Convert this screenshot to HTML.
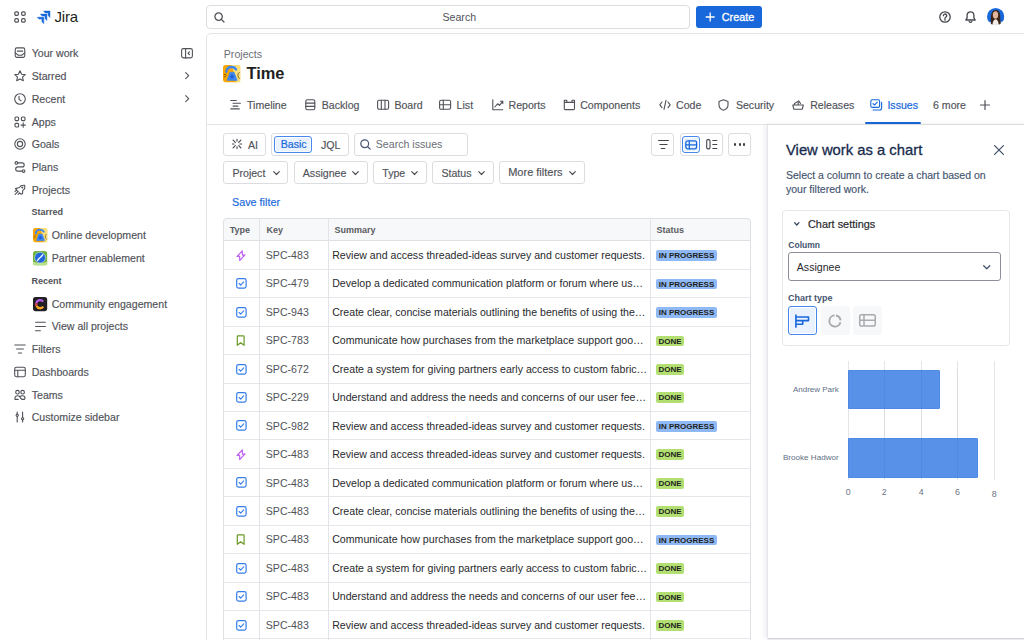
<!DOCTYPE html>
<html><head><meta charset="utf-8">
<style>
*{box-sizing:border-box;margin:0;padding:0}
html,body{width:1024px;height:640px;overflow:hidden;background:#fff}
body{position:relative;font-family:"Liberation Sans",sans-serif;font-size:10.6px;color:#292a2e}
.a{position:absolute}
.t{position:absolute;white-space:nowrap;height:20px;line-height:20px}
svg{position:absolute;overflow:visible}
.ic{fill:none;stroke:#505258;stroke-width:1.1;stroke-linecap:round;stroke-linejoin:round}
.side{color:#505258;-webkit-text-stroke:0.15px #505258}
.btn{position:absolute;border:1px solid #dcdde0;border-radius:3px;background:#fff}
.row{position:absolute;left:223.4px;width:527.4px;height:28.44px;border-bottom:1px solid #e3e4e7}
</style></head><body>

<!-- TOP BAR -->
<div class="a" style="left:206px;top:33px;width:830px;height:620px;border:1px solid #e3e4e7;border-top-left-radius:5px"></div>
<svg style="left:14px;top:11px" width="12" height="12" viewBox="0 0 12 12"><g class="ic" style="stroke:#505258;stroke-width:1.2"><rect x="0.8" y="0.8" width="3.6" height="3.6" rx="1.3"/><rect x="7.6" y="0.8" width="3.6" height="3.6" rx="1.3"/><rect x="0.8" y="7.6" width="3.6" height="3.6" rx="1.3"/><rect x="7.6" y="7.6" width="3.6" height="3.6" rx="1.3"/></g></svg>
<svg style="left:36px;top:9px" width="16" height="16" viewBox="0 0 16 16"><g fill="#1868db"><path id="jl" d="M-6.5,0.2 L0,0.2 L0,6.7 Q-0.6,6.2 -1.9,4.7 L-1.9,2.1 L-4.7,2.1 Q-6.2,0.8 -6.5,0.2Z" stroke="#1868db" stroke-width="0.45" stroke-linejoin="round" transform="translate(14,1.8)"/><use href="#jl" transform="translate(-3.1,3.1)"/><use href="#jl" transform="translate(-6.2,6.2)"/></g></svg>
<div class="t" style="left:54.5px;top:7px;font-size:15px;color:#1e1f21;letter-spacing:-0.2px">Jira</div>

<div class="a" style="left:206px;top:5px;width:484px;height:24px;border:1px solid #dcdde0;border-radius:4px"></div>
<svg style="left:214px;top:12px" width="11" height="11" viewBox="0 0 11 11"><g class="ic" style="stroke-width:1.3"><circle cx="4.6" cy="4.6" r="3.7"/><path d="M7.4 7.4l2.6 2.6"/></g></svg>
<div class="t" style="left:442.5px;top:7px;color:#505258">Search</div>

<div class="a" style="left:695.6px;top:5.9px;width:66.2px;height:22.1px;background:#1868db;border-radius:3px"></div>
<svg style="left:704.6px;top:12px" width="10.4" height="10" viewBox="0 0 10 10"><path d="M5 0.5v9M0.5 5h9" stroke="#fff" stroke-width="1.3" fill="none"/></svg>
<div class="t" style="left:721.8px;top:7px;color:#fff;font-size:10.8px;-webkit-text-stroke:0.3px #fff">Create</div>

<svg style="left:938.6px;top:11px" width="12" height="12" viewBox="0 0 12 12"><g class="ic" style="stroke-width:1.3;stroke:#44464c"><circle cx="6" cy="6" r="5.2"/><path d="M4.4 4.7a1.65 1.65 0 1 1 2.3 1.5c-.5.3-.7.6-.7 1.1v.2"/></g><circle cx="6" cy="8.9" r="0.8" fill="#44464c"/></svg>
<svg style="left:965px;top:11px" width="11" height="12" viewBox="0 0 11 12"><g class="ic" style="stroke-width:1.3;stroke:#44464c"><path d="M5.5 0.8c-2 0-3.4 1.5-3.4 3.5v2.6L0.8 9h9.4L8.9 6.9V4.3c0-2-1.4-3.5-3.4-3.5z"/><path d="M4.2 10.6c.4.5.8.7 1.3.7s.9-.2 1.3-.7"/></g></svg>
<svg style="left:987px;top:8.4px" width="17.3" height="17.3" viewBox="0 0 17.3 17.3"><defs><clipPath id="avc"><circle cx="8.65" cy="8.65" r="8.65"/></clipPath></defs><g clip-path="url(#avc)"><rect width="17.3" height="17.3" fill="#1868db"/><path d="M0 13.6Q3 12.8 5 15.5L12 15.5Q14 12.8 17.3 13.6V17.3H0Z" fill="#fff"/><path d="M4.2 16.5C3.4 12 3.6 9 4.6 5.2C5.4 2.8 7 1.9 8.8 1.9C11 1.9 12.6 3.3 13 6C13.4 9.5 13.2 13 14 16.5Z" fill="#3a2418"/><ellipse cx="8.5" cy="7" rx="2.7" ry="3.7" fill="#e2b49c"/><path d="M5.4 17.3C5.6 13.5 6.8 11.5 8.6 11.3C10.5 11.5 11.6 13.5 11.7 17.3Z" fill="#f1ece4"/></g></svg>
<!-- SIDEBAR -->
<!-- sidebar items -->
<svg style="left:14px;top:47.40px" width="12" height="12" viewBox="0 0 12 12"><g class="ic"><rect x="1.25" y="0.85" width="9.5" height="9.5" rx="1.6"/><path d="M3.3 4.1h5.4M1.25 5.9L4.4 8.3h3.2l3.15-2.4"/></g></svg>
<div class="t side" style="left:31.7px;top:43.40px">Your work</div>
<svg style="left:14px;top:70.16px" width="12" height="12" viewBox="0 0 12 12"><g class="ic"><path d="M6 0.8l1.6 3.4 3.6.4-2.7 2.5.8 3.6L6 8.9l-3.3 1.8.8-3.6L.8 4.6l3.6-.4z"/></g></svg>
<div class="t side" style="left:31.7px;top:66.16px">Starred</div>
<svg style="left:14px;top:92.92px" width="12" height="12" viewBox="0 0 12 12"><g class="ic"><circle cx="6" cy="6" r="5.3"/><path d="M5 3.2v3.2l2 1.4"/></g></svg>
<div class="t side" style="left:31.7px;top:88.92px">Recent</div>
<svg style="left:14px;top:115.68px" width="12" height="12" viewBox="0 0 12 12"><g class="ic"><rect x="1" y="1" width="3.6" height="3.6" rx="1"/><rect x="7.4" y="1" width="3.6" height="3.6" rx="1"/><rect x="1" y="7.4" width="3.6" height="3.6" rx="1"/><path d="M9.2 6.9v4.4M7 9.1h4.4"/></g></svg>
<div class="t side" style="left:31.7px;top:111.68px">Apps</div>
<svg style="left:14px;top:138.44px" width="12" height="12" viewBox="0 0 12 12"><g class="ic"><circle cx="6" cy="6" r="5.2"/><circle cx="6" cy="6" r="2.6"/></g></svg>
<div class="t side" style="left:31.7px;top:134.44px">Goals</div>
<svg style="left:14px;top:161.20px" width="12" height="12" viewBox="0 0 12 12"><g class="ic"><circle cx="2.4" cy="1.9" r="1.3"/><circle cx="9.6" cy="10.1" r="1.3"/><path d="M3.7 1.9h4.5a2 2 0 0 1 0 4H3.8a2.1 2.1 0 0 0 0 4.2h4.5"/></g></svg>
<div class="t side" style="left:31.7px;top:157.20px">Plans</div>
<svg style="left:14px;top:183.96px" width="12" height="12" viewBox="0 0 12 12"><g class="ic"><path d="M3.3 6.9L1.5 4.6l3.9-1.1L7 1.7q1.7-.6 3.7-.4.3 1.7-.2 3.6L8.7 6.6l-.1 3-1.3.7-2.1-1.5M1.2 10.3l3-3M4.2 10.4l1.2-1.2M1 7.6l.9-.9"/><circle cx="8.3" cy="3.5" r=".5"/></g></svg>
<div class="t side" style="left:31.7px;top:179.96px">Projects</div>
<svg style="left:180.5px;top:47.8px" width="12" height="10.5" viewBox="0 0 12 10.5"><g class="ic"><rect x="0.6" y="0.6" width="10.8" height="9.3" rx="1.8"/><path d="M4.6 0.6v9.3M8.4 3.9L7.1 5.25l1.3 1.35"/></g></svg>
<svg style="left:184.5px;top:72.46px" width="4.5" height="7.4" viewBox="0 0 4.5 7.4"><path class="ic" d="M0.7 0.7l3 3-3 3"/></svg>
<svg style="left:184.5px;top:95.22px" width="4.5" height="7.4" viewBox="0 0 4.5 7.4"><path class="ic" d="M0.7 0.7l3 3-3 3"/></svg>
<div class="t" style="left:31.5px;top:202.4px;font-size:9px;font-weight:bold;color:#505258">Starred</div>
<div class="t" style="left:31.5px;top:271.2px;font-size:9px;font-weight:bold;color:#505258">Recent</div>
<svg style="left:32.5px;top:228.1px" width="14.2" height="14.2" viewBox="0 0 17.2 17.2"><rect width="17.2" height="17.2" rx="2.6" fill="#fca700"/><path d="M8.5 0H17.2V17.2H13.2Q12 9 8.5 0Z" fill="#fde07a"/><path d="M3.4 6.8C3.6 3.6 6 2 8.6 2C10.7 2 12.3 3 13 4.5" stroke="#3d86f2" stroke-width="2.3" fill="none" stroke-linecap="round"/><path d="M6.9 7.3H11.1L14.3 15.4H4.1Z" fill="#3d86f2" stroke="#3d86f2" stroke-width="0.6" stroke-linejoin="round"/><circle cx="9" cy="11.6" r="1.9" fill="#1f63d8"/><path d="M1 9.3q1.3.9 2.3-.2M0.9 12q1.6.1 2.5-1.4" stroke="#4a3800" stroke-width="0.7" fill="none"/><path d="M16.6 7.2q-2 1.3-1.7 3.4q.3 2 1.8 3.4" stroke="#4a3800" stroke-width="0.7" fill="none"/></svg>
<div class="t side" style="left:51.7px;top:225.3px">Online development</div>
<svg style="left:32.5px;top:251px" width="14.2" height="14.2" viewBox="0 0 14.2 14.2"><rect width="14.2" height="14.2" rx="2.6" fill="#6fb43f"/><path d="M0 10.5Q7 13.5 14.2 10.5V14.2H0Z" fill="#b9e08a"/><circle cx="7.1" cy="6.6" r="5.4" fill="#1f66dc" stroke="#e8f2ff" stroke-width="0.5"/><path d="M9.8 3.6L4.4 9.6" stroke="#fff" stroke-width="1.2" stroke-linecap="round"/><path d="M9.8 3.6L8.6 6.5M4.4 9.6L5.6 6.7" stroke="#dfeaff" stroke-width="0.5"/></svg>
<div class="t side" style="left:51.7px;top:248.2px">Partner enablement</div>
<svg style="left:32.5px;top:296.5px" width="14.2" height="14.2" viewBox="0 0 14.2 14.2"><rect width="14.2" height="14.2" rx="2.6" fill="#1f1f24"/><g fill="none" stroke-width="2.3"><path d="M10.2 4.6A3.9 3.9 0 0 0 3.3 6.2" stroke="#b45ce8"/><path d="M3.3 6.2A3.9 3.9 0 0 0 3.6 9" stroke="#e8484a"/><path d="M3.6 9A3.9 3.9 0 0 0 10.3 9.6" stroke="#f6a623"/></g></svg>
<div class="t side" style="left:51.7px;top:293.6px">Community engagement</div>
<svg style="left:34.5px;top:320.5px" width="11" height="11" viewBox="0 0 11 11"><g class="ic"><path d="M0.6 1.2h9.8M0.6 5.5h9.8M0.6 9.8h4.8"/></g></svg>
<div class="t side" style="left:51.7px;top:316.4px">View all projects</div>
<svg style="left:14px;top:343.20px" width="12" height="12" viewBox="0 0 12 12"><g class="ic"><path d="M0.8 2h10.4M2.6 6h6.8M4.4 10h3.2"/></g></svg>
<div class="t side" style="left:31.7px;top:339.20px">Filters</div>
<svg style="left:14px;top:365.96px" width="12" height="12" viewBox="0 0 12 12"><g class="ic"><rect x="0.7" y="1.3" width="10.6" height="9.4" rx="1.6"/><path d="M0.7 4.2h10.6M3.8 4.2v6.5"/></g></svg>
<div class="t side" style="left:31.7px;top:361.96px">Dashboards</div>
<svg style="left:14px;top:388.72px" width="12" height="12" viewBox="0 0 12 12"><g class="ic"><circle cx="3.5" cy="3.2" r="1.8"/><circle cx="8.6" cy="3.2" r="1.8"/><path d="M1 10.4V9.1a2.4 2.4 0 0 1 2.4-2.4h.5c.9 0 1.6.5 2 1.2l.9 1.5c.4.7 1.1 1 1.9 1h.9a1.4 1.4 0 0 0 1.4-1.4 2.4 2.4 0 0 0-2.4-2.3h-.5c-.8 0-1.5.4-1.9 1M1 10.4h3.2"/></g></svg>
<div class="t side" style="left:31.7px;top:384.72px">Teams</div>
<svg style="left:14px;top:411.48px" width="12" height="12" viewBox="0 0 12 12"><g class="ic"><path d="M3.2 1v1.6M3.2 6v5M8.6 1v5M8.6 9.4v1.6M3.2 2.6l1.2 1.7-1.2 1.7-1.2-1.7z M8.6 6l1.2 1.7-1.2 1.7-1.2-1.7z"/></g></svg>
<div class="t side" style="left:31.7px;top:407.48px">Customize sidebar</div>

<!-- MAIN -->
<div class="t" style="left:223.8px;top:43.5px;color:#6b6e76">Projects</div>
<svg style="left:223px;top:64.6px" width="17.2" height="17.2" viewBox="0 0 17.2 17.2"><rect width="17.2" height="17.2" rx="2.6" fill="#fca700"/><path d="M8.5 0H17.2V17.2H13.2Q12 9 8.5 0Z" fill="#fde07a"/><path d="M3.4 6.8C3.6 3.6 6 2 8.6 2C10.7 2 12.3 3 13 4.5" stroke="#3d86f2" stroke-width="2.3" fill="none" stroke-linecap="round"/><path d="M6.9 7.3H11.1L14.3 15.4H4.1Z" fill="#3d86f2" stroke="#3d86f2" stroke-width="0.6" stroke-linejoin="round"/><circle cx="9" cy="11.6" r="1.9" fill="#1f63d8"/><path d="M1 9.3q1.3.9 2.3-.2M0.9 12q1.6.1 2.5-1.4" stroke="#4a3800" stroke-width="0.7" fill="none"/><path d="M16.6 7.2q-2 1.3-1.7 3.4q.3 2 1.8 3.4" stroke="#4a3800" stroke-width="0.7" fill="none"/></svg>
<div class="t" style="left:246.5px;top:63.2px;font-size:16.4px;font-weight:bold;color:#1e1f21">Time</div>
<svg style="left:229.5px;top:98.7px" width="12" height="12" viewBox="0 0 12 12"><g class="ic"><path d="M0.8 1.5h5.5M3 4.3h7.4M3 7.1h5M0.8 9.9h8.5"/></g></svg>
<div class="t side" style="left:247px;top:94.7px">Timeline</div>
<svg style="left:305px;top:98.7px" width="12" height="12" viewBox="0 0 12 12"><g class="ic"><rect x="0.8" y="0.8" width="9" height="10" rx="1.5"/><path d="M0.8 4.1h9M0.8 7.4h9"/></g></svg>
<div class="t side" style="left:321.8px;top:94.7px">Backlog</div>
<svg style="left:376.8px;top:98.7px" width="12" height="12" viewBox="0 0 12 12"><g class="ic"><rect x="0.6" y="1.3" width="11" height="9" rx="1.5"/><path d="M4.3 1.3v9M8 1.3v9"/></g></svg>
<div class="t side" style="left:394.4px;top:94.7px">Board</div>
<svg style="left:439px;top:98.7px" width="12" height="12" viewBox="0 0 12 12"><g class="ic"><rect x="0.6" y="1.3" width="11" height="9" rx="1.5"/><path d="M0.6 5.8h11M4.3 1.3v9"/></g></svg>
<div class="t side" style="left:456.6px;top:94.7px">List</div>
<svg style="left:491.5px;top:98.7px" width="12" height="12" viewBox="0 0 12 12"><g class="ic"><path d="M0.8 0.8v10h10M2.8 8l2.8-3.2 2 1.6 3.2-4.2M8.4 2.2h2.4v2.4"/></g></svg>
<div class="t side" style="left:508.5px;top:94.7px">Reports</div>
<svg style="left:562.7px;top:98.7px" width="12" height="12" viewBox="0 0 12 12"><g class="ic"><path d="M1.3 3.4v6.3a.9.9 0 0 0 .9.9h8.4a.9.9 0 0 0 .9-.9V3.4H1.3zM1.3 3.4V1.2h2.5v2.2M9 3.4V1.2h2.5v2.2"/></g></svg>
<div class="t side" style="left:580.2px;top:94.7px">Components</div>
<svg style="left:658.5px;top:98.7px" width="12" height="12" viewBox="0 0 12 12"><g class="ic"><path d="M3 3L0.8 5.8 3 8.6M9 3l2.2 2.8L9 8.6M7 1.3L5 10.3"/></g></svg>
<div class="t side" style="left:676px;top:94.7px">Code</div>
<svg style="left:718.3px;top:98.7px" width="12" height="12" viewBox="0 0 12 12"><g class="ic"><path d="M5.5 0.8L1 2.4v3.5c0 2.6 2 4.4 4.5 5.3 2.5-.9 4.5-2.7 4.5-5.3V2.4z"/></g></svg>
<div class="t side" style="left:735.9px;top:94.7px">Security</div>
<svg style="left:792.4px;top:98.7px" width="12" height="12" viewBox="0 0 12 12"><g class="ic"><path d="M0.8 6h10.5l-1 4.2H1.8zM2.5 6V4.5l4.2-2.6 1.8 2.6M6.2 3.2v2.8"/></g></svg>
<div class="t side" style="left:810.2px;top:94.7px">Releases</div>
<svg style="left:870px;top:98.7px" width="13" height="12" viewBox="0 0 13 12"><g class="ic" style="stroke:#1868db"><rect x="0.8" y="0.8" width="8.8" height="7.6" rx="1.4"/><path d="M3 4.6l1.5 1.4 2.8-2.8M11.6 3.2v5.8a2 2 0 0 1-2 2H3"/></g></svg>
<div class="t" style="left:887.4px;top:94.7px;color:#1868db;-webkit-text-stroke:0.2px #1868db">Issues</div>
<div class="t side" style="left:933px;top:94.7px">6 more</div>
<svg style="left:980px;top:99.7px" width="10" height="10" viewBox="0 0 10 10"><path class="ic" style="stroke-width:1.2" d="M5 0.5v9M0.5 5h9"/></svg>
<div class="a" style="left:207px;top:124px;width:817px;height:1px;background:#e3e4e7"></div>
<div class="a" style="left:865px;top:122px;width:56px;height:2.2px;background:#1868db;border-radius:1px"></div>
<div class="btn" style="left:223px;top:133px;width:43px;height:23px"></div>
<svg style="left:232.4px;top:139.2px" width="10" height="10" viewBox="0 0 10 10"><g class="ic" style="stroke-width:1.15;stroke:#44464c"><path d="M5 0.4v1.7M5 7.9v1.7M0.4 5h1.7M7.9 5h1.7M1.1 1.1l2.2 2.2M8.9 1.1L6.7 3.3M1.1 8.9l2.2-2.2M8.9 8.9L6.7 6.7"/></g></svg>
<div class="t side" style="left:248px;top:134.5px">AI</div>
<div class="btn" style="left:271px;top:133px;width:78px;height:23px"></div>
<div class="a" style="left:274px;top:136px;width:38px;height:17px;background:#e9f2fe;border:1px solid #4688ec;border-radius:3px;box-shadow:inset 0 0 0 1px #fff"></div>
<div class="t" style="left:280.7px;top:134px;color:#1868db;-webkit-text-stroke:0.2px #1868db">Basic</div>
<div class="t side" style="left:320.9px;top:134.5px">JQL</div>
<div class="btn" style="left:354px;top:133px;width:114px;height:23px"></div>
<svg style="left:359.8px;top:139.3px" width="11" height="11" viewBox="0 0 11 11"><g class="ic" style="stroke:#44546f;stroke-width:1.2"><circle cx="4.7" cy="4.7" r="3.9"/><path d="M7.5 7.5l2.7 2.7"/></g></svg>
<div class="t" style="left:375.8px;top:134px;color:#6b6e76">Search issues</div>
<div class="btn" style="left:651px;top:133px;width:23px;height:23px"></div>
<svg style="left:657.5px;top:139px" width="11" height="11" viewBox="0 0 11 11"><g class="ic" style="stroke-width:1.1;stroke:#44464c"><path d="M0.6 1.5h9.8M1.9 5.5h7.2M3.2 9.5h3.6"/></g></svg>
<div class="btn" style="left:680px;top:133px;width:43px;height:23px"></div>
<div class="a" style="left:682px;top:136px;width:18px;height:17px;background:#e9f2fe;border:1px solid #4688ec;border-radius:3px;box-shadow:inset 0 0 0 1px #fff"></div>
<svg style="left:685px;top:139.5px" width="12" height="9.5" viewBox="0 0 12 9.5"><g class="ic" style="stroke:#1868db;stroke-width:1.25"><rect x="0.8" y="0.8" width="10.8" height="8" rx="2"/><path d="M0.8 4.8h10.8M4.3 0.8v8"/></g></svg>
<svg style="left:705.5px;top:139px" width="11.5" height="10.5" viewBox="0 0 11.5 10.5"><g class="ic" style="stroke-width:1.1;stroke:#44464c"><rect x="0.7" y="0.6" width="3.3" height="9.3" rx="1.3"/><path d="M6.8 1.5h4M6.8 5.5h4M6.8 9.5h4"/></g></svg>
<div class="btn" style="left:728px;top:133px;width:23px;height:23px"></div>
<div class="a" style="left:733.8px;top:143.4px;width:2.2px;height:2.2px;border-radius:50%;background:#3b3d42"></div>
<div class="a" style="left:738.5px;top:143.4px;width:2.2px;height:2.2px;border-radius:50%;background:#3b3d42"></div>
<div class="a" style="left:743.1px;top:143.4px;width:2.2px;height:2.2px;border-radius:50%;background:#3b3d42"></div>
<div class="btn" style="left:223px;top:161px;width:65px;height:23px"></div>
<div class="t side" style="left:232.4px;top:162.7px">Project</div>
<svg style="left:272.5px;top:170.7px" width="7" height="4.5" viewBox="0 0 7 4.5"><path class="ic" style="stroke:#505258;stroke-width:1.2" d="M0.7 0.7l2.8 2.8 2.8-2.8"/></svg>
<div class="btn" style="left:294px;top:161px;width:74px;height:23px"></div>
<div class="t side" style="left:302.8px;top:162.7px">Assignee</div>
<svg style="left:352.3px;top:170.7px" width="7" height="4.5" viewBox="0 0 7 4.5"><path class="ic" style="stroke:#505258;stroke-width:1.2" d="M0.7 0.7l2.8 2.8 2.8-2.8"/></svg>
<div class="btn" style="left:373px;top:161px;width:54px;height:23px"></div>
<div class="t side" style="left:382.3px;top:162.7px">Type</div>
<svg style="left:411.3px;top:170.7px" width="7" height="4.5" viewBox="0 0 7 4.5"><path class="ic" style="stroke:#505258;stroke-width:1.2" d="M0.7 0.7l2.8 2.8 2.8-2.8"/></svg>
<div class="btn" style="left:432px;top:161px;width:62px;height:23px"></div>
<div class="t side" style="left:441.4px;top:162.7px">Status</div>
<svg style="left:478.09999999999997px;top:170.7px" width="7" height="4.5" viewBox="0 0 7 4.5"><path class="ic" style="stroke:#505258;stroke-width:1.2" d="M0.7 0.7l2.8 2.8 2.8-2.8"/></svg>
<div class="btn" style="left:499px;top:161px;width:86px;height:23px"></div>
<div class="t side" style="left:508.2px;top:162.2px;font-size:11px">More filters</div>
<svg style="left:569.1px;top:170.7px" width="7" height="4.5" viewBox="0 0 7 4.5"><path class="ic" style="stroke:#505258;stroke-width:1.2" d="M0.7 0.7l2.8 2.8 2.8-2.8"/></svg>
<div class="t" style="left:232px;top:192.1px;color:#1868db;font-size:10.8px;-webkit-text-stroke:0.15px #1868db">Save filter</div>
<div class="a" style="left:223px;top:218px;width:528px;height:23px;background:#f7f8f9;border-top-left-radius:4px;border-top-right-radius:4px"></div>
<div class="a" style="left:223px;top:218px;width:528px;height:440px;border:1px solid #dfe0e3;border-radius:4px"></div>
<div class="a" style="left:223px;top:240px;width:528px;height:1px;background:#dfe0e3"></div>
<div class="a" style="left:223px;top:268.74px;width:528px;height:1px;background:#e6e7ea"></div>
<div class="a" style="left:223px;top:297.18px;width:528px;height:1px;background:#e6e7ea"></div>
<div class="a" style="left:223px;top:325.62px;width:528px;height:1px;background:#e6e7ea"></div>
<div class="a" style="left:223px;top:354.06px;width:528px;height:1px;background:#e6e7ea"></div>
<div class="a" style="left:223px;top:382.50px;width:528px;height:1px;background:#e6e7ea"></div>
<div class="a" style="left:223px;top:410.94px;width:528px;height:1px;background:#e6e7ea"></div>
<div class="a" style="left:223px;top:439.38px;width:528px;height:1px;background:#e6e7ea"></div>
<div class="a" style="left:223px;top:467.82px;width:528px;height:1px;background:#e6e7ea"></div>
<div class="a" style="left:223px;top:496.26px;width:528px;height:1px;background:#e6e7ea"></div>
<div class="a" style="left:223px;top:524.70px;width:528px;height:1px;background:#e6e7ea"></div>
<div class="a" style="left:223px;top:553.14px;width:528px;height:1px;background:#e6e7ea"></div>
<div class="a" style="left:223px;top:581.58px;width:528px;height:1px;background:#e6e7ea"></div>
<div class="a" style="left:223px;top:610.02px;width:528px;height:1px;background:#e6e7ea"></div>
<div class="a" style="left:223px;top:638.46px;width:528px;height:1px;background:#e6e7ea"></div>
<div class="a" style="left:259px;top:218px;width:1px;height:440px;background:#e3e4e7"></div>
<div class="a" style="left:328px;top:218px;width:1px;height:440px;background:#e3e4e7"></div>
<div class="a" style="left:650px;top:218px;width:1px;height:440px;background:#e3e4e7"></div>
<div class="t" style="left:229.7px;top:219.7px;font-size:9px;font-weight:bold;color:#5a5c62">Type</div>
<div class="t" style="left:266.5px;top:219.7px;font-size:9px;font-weight:bold;color:#5a5c62">Key</div>
<div class="t" style="left:334.6px;top:219.7px;font-size:9px;font-weight:bold;color:#5a5c62">Summary</div>
<div class="t" style="left:656.6px;top:219.7px;font-size:9px;font-weight:bold;color:#5a5c62">Status</div>
<svg style="left:236.4px;top:249.82px" width="10.8" height="10.8" viewBox="0 0 10.8 10.8"><g fill="none" stroke-linecap="round" stroke-linejoin="round"><path d="M6.3 0.9L1.1 6.5l2.5-.1.1 4.1L9 4.9l-2.5.2z" style="stroke:#bf63f3;stroke-width:1.2"/></g></svg>
<div class="t" style="left:265.8px;top:245.02px;color:#505258">SPC-483</div>
<div class="t" style="left:332.2px;top:245.02px;color:#292a2e">Review and access threaded-ideas survey and customer requests.</div>
<div class="a" style="left:655.7px;top:250.22px;width:61.6px;height:10.8px;background:#8fb8f6;border-radius:2px;font-size:8px;font-weight:bold;color:#1e1f21;line-height:12.6px;text-align:center;white-space:nowrap">IN PROGRESS</div>
<svg style="left:236.4px;top:278.26px" width="10.8" height="10.8" viewBox="0 0 10.8 10.8"><g fill="none" stroke-linecap="round" stroke-linejoin="round"><rect x="0.7" y="0.7" width="9.4" height="9.4" rx="1.8" style="stroke:#357de8;stroke-width:1.2"/><path d="M3.1 5.5l1.6 1.6 3-3.3" style="stroke:#357de8;stroke-width:1.1"/></g></svg>
<div class="t" style="left:265.8px;top:273.46px;color:#505258">SPC-479</div>
<div class="t" style="left:332.2px;top:273.46px;color:#292a2e">Develop a dedicated communication platform or forum where us…</div>
<div class="a" style="left:655.7px;top:278.66px;width:61.6px;height:10.8px;background:#8fb8f6;border-radius:2px;font-size:8px;font-weight:bold;color:#1e1f21;line-height:12.6px;text-align:center;white-space:nowrap">IN PROGRESS</div>
<svg style="left:236.4px;top:306.70px" width="10.8" height="10.8" viewBox="0 0 10.8 10.8"><g fill="none" stroke-linecap="round" stroke-linejoin="round"><rect x="0.7" y="0.7" width="9.4" height="9.4" rx="1.8" style="stroke:#357de8;stroke-width:1.2"/><path d="M3.1 5.5l1.6 1.6 3-3.3" style="stroke:#357de8;stroke-width:1.1"/></g></svg>
<div class="t" style="left:265.8px;top:301.90px;color:#505258">SPC-943</div>
<div class="t" style="left:332.2px;top:301.90px;color:#292a2e">Create clear, concise materials outlining the benefits of using the…</div>
<div class="a" style="left:655.7px;top:307.10px;width:61.6px;height:10.8px;background:#8fb8f6;border-radius:2px;font-size:8px;font-weight:bold;color:#1e1f21;line-height:12.6px;text-align:center;white-space:nowrap">IN PROGRESS</div>
<svg style="left:236.4px;top:335.14px" width="10.8" height="10.8" viewBox="0 0 10.8 10.8"><g fill="none" stroke-linecap="round" stroke-linejoin="round"><path d="M2 0.8h5.4a.7.7 0 0 1 .7.7v8.8L4.7 7.8 1.3 10.3V1.5a.7.7 0 0 1 .7-.7z" style="stroke:#6a9a23;stroke-width:1.2"/></g></svg>
<div class="t" style="left:265.8px;top:330.34px;color:#505258">SPC-783</div>
<div class="t" style="left:332.2px;top:330.34px;color:#292a2e">Communicate how purchases from the marketplace support goo…</div>
<div class="a" style="left:655.7px;top:335.54px;width:28.7px;height:10.8px;background:#b3df72;border-radius:2px;font-size:8px;font-weight:bold;color:#1e1f21;line-height:12.6px;text-align:center;white-space:nowrap">DONE</div>
<svg style="left:236.4px;top:363.58px" width="10.8" height="10.8" viewBox="0 0 10.8 10.8"><g fill="none" stroke-linecap="round" stroke-linejoin="round"><rect x="0.7" y="0.7" width="9.4" height="9.4" rx="1.8" style="stroke:#357de8;stroke-width:1.2"/><path d="M3.1 5.5l1.6 1.6 3-3.3" style="stroke:#357de8;stroke-width:1.1"/></g></svg>
<div class="t" style="left:265.8px;top:358.78px;color:#505258">SPC-672</div>
<div class="t" style="left:332.2px;top:358.78px;color:#292a2e">Create a system for giving partners early access to custom fabric…</div>
<div class="a" style="left:655.7px;top:363.98px;width:28.7px;height:10.8px;background:#b3df72;border-radius:2px;font-size:8px;font-weight:bold;color:#1e1f21;line-height:12.6px;text-align:center;white-space:nowrap">DONE</div>
<svg style="left:236.4px;top:392.02px" width="10.8" height="10.8" viewBox="0 0 10.8 10.8"><g fill="none" stroke-linecap="round" stroke-linejoin="round"><rect x="0.7" y="0.7" width="9.4" height="9.4" rx="1.8" style="stroke:#357de8;stroke-width:1.2"/><path d="M3.1 5.5l1.6 1.6 3-3.3" style="stroke:#357de8;stroke-width:1.1"/></g></svg>
<div class="t" style="left:265.8px;top:387.22px;color:#505258">SPC-229</div>
<div class="t" style="left:332.2px;top:387.22px;color:#292a2e">Understand and address the needs and concerns of our user fee…</div>
<div class="a" style="left:655.7px;top:392.42px;width:28.7px;height:10.8px;background:#b3df72;border-radius:2px;font-size:8px;font-weight:bold;color:#1e1f21;line-height:12.6px;text-align:center;white-space:nowrap">DONE</div>
<svg style="left:236.4px;top:420.46px" width="10.8" height="10.8" viewBox="0 0 10.8 10.8"><g fill="none" stroke-linecap="round" stroke-linejoin="round"><rect x="0.7" y="0.7" width="9.4" height="9.4" rx="1.8" style="stroke:#357de8;stroke-width:1.2"/><path d="M3.1 5.5l1.6 1.6 3-3.3" style="stroke:#357de8;stroke-width:1.1"/></g></svg>
<div class="t" style="left:265.8px;top:415.66px;color:#505258">SPC-982</div>
<div class="t" style="left:332.2px;top:415.66px;color:#292a2e">Review and access threaded-ideas survey and customer requests.</div>
<div class="a" style="left:655.7px;top:420.86px;width:61.6px;height:10.8px;background:#8fb8f6;border-radius:2px;font-size:8px;font-weight:bold;color:#1e1f21;line-height:12.6px;text-align:center;white-space:nowrap">IN PROGRESS</div>
<svg style="left:236.4px;top:448.90px" width="10.8" height="10.8" viewBox="0 0 10.8 10.8"><g fill="none" stroke-linecap="round" stroke-linejoin="round"><path d="M6.3 0.9L1.1 6.5l2.5-.1.1 4.1L9 4.9l-2.5.2z" style="stroke:#bf63f3;stroke-width:1.2"/></g></svg>
<div class="t" style="left:265.8px;top:444.10px;color:#505258">SPC-483</div>
<div class="t" style="left:332.2px;top:444.10px;color:#292a2e">Review and access threaded-ideas survey and customer requests.</div>
<div class="a" style="left:655.7px;top:449.30px;width:28.7px;height:10.8px;background:#b3df72;border-radius:2px;font-size:8px;font-weight:bold;color:#1e1f21;line-height:12.6px;text-align:center;white-space:nowrap">DONE</div>
<svg style="left:236.4px;top:477.34px" width="10.8" height="10.8" viewBox="0 0 10.8 10.8"><g fill="none" stroke-linecap="round" stroke-linejoin="round"><rect x="0.7" y="0.7" width="9.4" height="9.4" rx="1.8" style="stroke:#357de8;stroke-width:1.2"/><path d="M3.1 5.5l1.6 1.6 3-3.3" style="stroke:#357de8;stroke-width:1.1"/></g></svg>
<div class="t" style="left:265.8px;top:472.54px;color:#505258">SPC-483</div>
<div class="t" style="left:332.2px;top:472.54px;color:#292a2e">Develop a dedicated communication platform or forum where us…</div>
<div class="a" style="left:655.7px;top:477.74px;width:28.7px;height:10.8px;background:#b3df72;border-radius:2px;font-size:8px;font-weight:bold;color:#1e1f21;line-height:12.6px;text-align:center;white-space:nowrap">DONE</div>
<svg style="left:236.4px;top:505.78px" width="10.8" height="10.8" viewBox="0 0 10.8 10.8"><g fill="none" stroke-linecap="round" stroke-linejoin="round"><rect x="0.7" y="0.7" width="9.4" height="9.4" rx="1.8" style="stroke:#357de8;stroke-width:1.2"/><path d="M3.1 5.5l1.6 1.6 3-3.3" style="stroke:#357de8;stroke-width:1.1"/></g></svg>
<div class="t" style="left:265.8px;top:500.98px;color:#505258">SPC-483</div>
<div class="t" style="left:332.2px;top:500.98px;color:#292a2e">Create clear, concise materials outlining the benefits of using the…</div>
<div class="a" style="left:655.7px;top:506.18px;width:28.7px;height:10.8px;background:#b3df72;border-radius:2px;font-size:8px;font-weight:bold;color:#1e1f21;line-height:12.6px;text-align:center;white-space:nowrap">DONE</div>
<svg style="left:236.4px;top:534.22px" width="10.8" height="10.8" viewBox="0 0 10.8 10.8"><g fill="none" stroke-linecap="round" stroke-linejoin="round"><path d="M2 0.8h5.4a.7.7 0 0 1 .7.7v8.8L4.7 7.8 1.3 10.3V1.5a.7.7 0 0 1 .7-.7z" style="stroke:#6a9a23;stroke-width:1.2"/></g></svg>
<div class="t" style="left:265.8px;top:529.42px;color:#505258">SPC-483</div>
<div class="t" style="left:332.2px;top:529.42px;color:#292a2e">Communicate how purchases from the marketplace support goo…</div>
<div class="a" style="left:655.7px;top:534.62px;width:61.6px;height:10.8px;background:#8fb8f6;border-radius:2px;font-size:8px;font-weight:bold;color:#1e1f21;line-height:12.6px;text-align:center;white-space:nowrap">IN PROGRESS</div>
<svg style="left:236.4px;top:562.66px" width="10.8" height="10.8" viewBox="0 0 10.8 10.8"><g fill="none" stroke-linecap="round" stroke-linejoin="round"><rect x="0.7" y="0.7" width="9.4" height="9.4" rx="1.8" style="stroke:#357de8;stroke-width:1.2"/><path d="M3.1 5.5l1.6 1.6 3-3.3" style="stroke:#357de8;stroke-width:1.1"/></g></svg>
<div class="t" style="left:265.8px;top:557.86px;color:#505258">SPC-483</div>
<div class="t" style="left:332.2px;top:557.86px;color:#292a2e">Create a system for giving partners early access to custom fabric…</div>
<div class="a" style="left:655.7px;top:563.06px;width:28.7px;height:10.8px;background:#b3df72;border-radius:2px;font-size:8px;font-weight:bold;color:#1e1f21;line-height:12.6px;text-align:center;white-space:nowrap">DONE</div>
<svg style="left:236.4px;top:591.10px" width="10.8" height="10.8" viewBox="0 0 10.8 10.8"><g fill="none" stroke-linecap="round" stroke-linejoin="round"><rect x="0.7" y="0.7" width="9.4" height="9.4" rx="1.8" style="stroke:#357de8;stroke-width:1.2"/><path d="M3.1 5.5l1.6 1.6 3-3.3" style="stroke:#357de8;stroke-width:1.1"/></g></svg>
<div class="t" style="left:265.8px;top:586.30px;color:#505258">SPC-483</div>
<div class="t" style="left:332.2px;top:586.30px;color:#292a2e">Understand and address the needs and concerns of our user fee…</div>
<div class="a" style="left:655.7px;top:591.50px;width:28.7px;height:10.8px;background:#b3df72;border-radius:2px;font-size:8px;font-weight:bold;color:#1e1f21;line-height:12.6px;text-align:center;white-space:nowrap">DONE</div>
<svg style="left:236.4px;top:619.54px" width="10.8" height="10.8" viewBox="0 0 10.8 10.8"><g fill="none" stroke-linecap="round" stroke-linejoin="round"><rect x="0.7" y="0.7" width="9.4" height="9.4" rx="1.8" style="stroke:#357de8;stroke-width:1.2"/><path d="M3.1 5.5l1.6 1.6 3-3.3" style="stroke:#357de8;stroke-width:1.1"/></g></svg>
<div class="t" style="left:265.8px;top:614.74px;color:#505258">SPC-483</div>
<div class="t" style="left:332.2px;top:614.74px;color:#292a2e">Review and access threaded-ideas survey and customer requests.</div>
<div class="a" style="left:655.7px;top:619.94px;width:28.7px;height:10.8px;background:#b3df72;border-radius:2px;font-size:8px;font-weight:bold;color:#1e1f21;line-height:12.6px;text-align:center;white-space:nowrap">DONE</div>
<div id="main"></div>

<!-- PANEL -->
<div class="a" style="left:767.5px;top:125px;width:270px;height:513px;background:#fff;box-shadow:-1px 0 0 #e6e7ea,-3px 0 6px rgba(9,30,66,0.08),0 1px 0 #dcdde0,0 2px 3px rgba(9,30,66,0.10)"></div>
<div class="t" style="left:786px;top:140px;font-size:14.8px;color:#172b4d;-webkit-text-stroke:0.3px #172b4d">View work as a chart</div>
<svg style="left:993.6px;top:145.2px" width="10" height="10" viewBox="0 0 10 10"><path d="M0.6 0.6l8.8 8.8M9.4 0.6L0.6 9.4" stroke="#44546f" stroke-width="1.3" fill="none" stroke-linecap="round"/></svg>
<div class="a" style="left:786px;top:167.5px;width:230px;font-size:10.5px;line-height:14px;color:#44546f;-webkit-text-stroke:0.15px #44546f">Select a column to create a chart based on<br>your filtered work.</div>
<div class="a" style="left:782px;top:210px;width:228px;height:136px;border:1px solid #e6e7ea;border-radius:4px"></div>
<svg style="left:793.8px;top:222.2px" width="5.6" height="3.8" viewBox="0 0 5.6 3.8"><path d="M0.6 0.6l2.2 2.4 2.2-2.4" stroke="#2c3e5d" stroke-width="1.2" fill="none" stroke-linecap="round" stroke-linejoin="round"/></svg>
<div class="t" style="left:808px;top:214.2px;font-size:10.9px;color:#292a2e;-webkit-text-stroke:0.2px #292a2e">Chart settings</div>
<div class="t" style="left:788.3px;top:235px;font-size:8.5px;font-weight:bold;color:#44546f">Column</div>
<div class="a" style="left:788px;top:252px;width:213px;height:29px;border:1px solid #8c8f97;border-radius:3px"></div>
<div class="t" style="left:796.8px;top:256.5px;color:#292a2e">Assignee</div>
<svg style="left:983.2px;top:264.8px" width="7.5" height="4.6" viewBox="0 0 7.5 4.6"><path d="M0.7 0.7l3.05 3.05 3.05-3.05" stroke="#44546f" stroke-width="1.3" fill="none" stroke-linecap="round" stroke-linejoin="round"/></svg>
<div class="t" style="left:788.1px;top:288px;font-size:9px;font-weight:bold;color:#44546f">Chart type</div>
<div class="a" style="left:788px;top:306px;width:29px;height:29px;background:#e9f2fe;border:1px solid #4688ec;border-radius:3px;box-shadow:inset 0 0 0 1px #fff"></div>
<svg style="left:794.7px;top:313.6px" width="14.5" height="14.2" viewBox="0 0 14.5 14.2"><g fill="none" stroke="#1868db" stroke-width="1.6" stroke-linejoin="round"><path d="M0.9 0.5v13.2"/><path d="M0.9 3h12.6v3.6H0.9M0.9 6.6h6.8v3.6H0.9"/></g></svg>
<div class="a" style="left:821px;top:306px;width:28.5px;height:29px;background:#f7f8f9;border-radius:3px"></div>
<svg style="left:827.8px;top:313.6px" width="14" height="14" viewBox="0 0 14 14"><g fill="none" stroke="#a9abaf" stroke-width="1.9"><path d="M12.4 8.2A5.6 5.6 0 1 1 6.6 1.4"/><path d="M8 1.5A5.6 5.6 0 0 1 12.5 6.3"/></g></svg>
<div class="a" style="left:853.4px;top:306px;width:28.5px;height:29px;background:#f7f8f9;border-radius:3px"></div>
<svg style="left:859px;top:314.3px" width="17" height="12.7" viewBox="0 0 17 12.7"><g fill="none" stroke="#a9abaf" stroke-width="1.5"><rect x="0.75" y="0.75" width="15.5" height="11.2" rx="1.8"/><path d="M0.75 6.35h15.5M5 0.75v11.2"/></g></svg>
<div class="a" style="left:847.6px;top:360.5px;width:1px;height:119.5px;background:#e4e5e8"></div>
<div class="a" style="left:883.7px;top:360.5px;width:1px;height:119.5px;background:#e4e5e8"></div>
<div class="a" style="left:920.7px;top:360.5px;width:1px;height:119.5px;background:#e4e5e8"></div>
<div class="a" style="left:957.0px;top:360.5px;width:1px;height:119.5px;background:#e4e5e8"></div>
<div class="a" style="left:993.8px;top:360.5px;width:1px;height:119.5px;background:#e4e5e8"></div>
<div class="a" style="left:847.7px;top:369.9px;width:92px;height:39.4px;background:#528ee8;border:1px solid #4a86e6;border-radius:0 1px 1px 0;opacity:0.97"></div>
<div class="a" style="left:847.7px;top:437.9px;width:130.4px;height:39.8px;background:#528ee8;border:1px solid #4a86e6;border-radius:0 1px 1px 0;opacity:0.97"></div>
<div class="a" style="left:883.7px;top:369px;width:1px;height:109px;background:rgba(9,30,66,0.045)"></div>
<div class="a" style="left:920.7px;top:369px;width:1px;height:109px;background:rgba(9,30,66,0.045)"></div>
<div class="a" style="left:957.0px;top:369px;width:1px;height:109px;background:rgba(9,30,66,0.045)"></div>
<div class="a" style="left:760px;top:379.8px;width:78.7px;height:20px;line-height:20px;text-align:right;font-size:8px;color:#626f86">Andrew Park</div>
<div class="a" style="left:760px;top:447.8px;width:78.7px;height:20px;line-height:20px;text-align:right;font-size:8.1px;color:#626f86">Brooke Hadwor</div>
<div class="a" style="left:838.1px;top:482.4px;width:20px;height:20px;line-height:20px;text-align:center;font-size:8.8px;color:#6b7283">0</div>
<div class="a" style="left:874.2px;top:482.4px;width:20px;height:20px;line-height:20px;text-align:center;font-size:8.8px;color:#6b7283">2</div>
<div class="a" style="left:911.2px;top:482.4px;width:20px;height:20px;line-height:20px;text-align:center;font-size:8.8px;color:#6b7283">4</div>
<div class="a" style="left:947.5px;top:482.4px;width:20px;height:20px;line-height:20px;text-align:center;font-size:8.8px;color:#6b7283">6</div>
<div class="a" style="left:984.3px;top:484.0px;width:20px;height:20px;line-height:20px;text-align:center;font-size:8.8px;color:#6b7283">8</div>

</body></html>
